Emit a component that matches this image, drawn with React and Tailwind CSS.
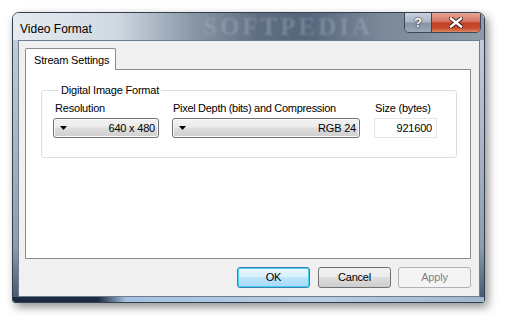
import React from "react";

const Combo = ({ value, width }) => (
    <div
        className={`${width} h-[20px] flex items-center justify-between pl-[6px] pr-[3px] rounded-[3px] border border-[#707070] bg-[linear-gradient(to_bottom,#f2f2f2_0%,#ebebeb_45%,#dddddd_50%,#cfcfcf_100%)] shadow-[inset_0_0_0_1px_#fcfcfc]`}
    >
        <svg width="7" height="4" viewBox="0 0 7 4">
            <path d="M0 0 H7 L3.5 4 Z" fill="#000" />
        </svg>
        <span className="text-[11px] tracking-[-0.2px] text-black">{value}</span>
    </div>
);

const Button = ({ children, kind }) => {
    let cls = "border-[#707070] text-black bg-[linear-gradient(to_bottom,#f2f2f2_0%,#ebebeb_45%,#dddddd_50%,#cfcfcf_100%)]";
    if (kind === "default")
        cls = "border-[#3c7fb1] text-black bg-[linear-gradient(to_bottom,#eaf6fd_0%,#d9f0fc_45%,#bee6fd_50%,#a7d9f5_100%)] shadow-[inset_0_0_0_1px_#48d0f4]";
    if (kind === "disabled")
        cls = "border-[#adb2b5] text-[#838383] bg-[#f4f4f4]";
    return (
        <div className={`w-[73px] h-[21px] flex items-center justify-center rounded-[3px] border text-[11px] tracking-[-0.2px] ${cls}`}>
            {children}
        </div>
    );
};

export default function App() {
    return (
        <div className="w-[506px] h-[324px] bg-white pl-[12px] pt-[12px] font-['Liberation_Sans',Arial,sans-serif] overflow-hidden">
            <div className="w-[473px] h-[291px] flex flex-col rounded-t-[7px] rounded-b-[3px] border border-[#34404f] shadow-[3px_4px_10px_rgba(0,0,0,0.45)] overflow-hidden">
                {/* title bar */}
                <div className="h-[27px] flex items-start justify-between pr-[3px] relative overflow-hidden bg-[linear-gradient(to_right,#e6ebf0_0%,#cfd8e1_22%,#8a98a8_38%,#5f6e80_52%,#56657a_62%,#7a8899_78%,#8f9ba8_100%)]">
                    <span className="pl-[7px] pt-[7px] text-[12px] text-black relative z-10">Video Format</span>
                    <span className="absolute left-[190px] top-0 text-[25px] leading-[27px] font-bold tracking-[3px] text-[#aebdce] opacity-35 blur-[1px] font-['Liberation_Serif',serif]">
                        SOFTPEDIA
                    </span>
                    <div className="-mt-px flex h-[21px] rounded-b-[5px] border border-[#3d4654] overflow-hidden relative z-10">
                        <div className="w-[27px] flex items-center justify-center border-r border-[#3d4654] bg-[linear-gradient(to_bottom,#c9d2dc_0%,#aab6c3_48%,#8593a3_52%,#9aa9b8_100%)]">
                            <span className="text-[13px] font-bold text-white [text-shadow:0_0_2px_#222,0_0_1px_#222]">?</span>
                        </div>
                        <div className="w-[48px] flex items-center justify-center bg-[linear-gradient(to_bottom,#e8a796_0%,#d6725f_45%,#c24126_52%,#c84c2e_80%,#de8a66_100%)]">
                            <svg width="14" height="11" viewBox="0 0 14 11">
                                <path d="M2 1.5 L12 9.5 M12 1.5 L2 9.5" stroke="#3a1a14" strokeWidth="4.2" strokeLinecap="square" />
                                <path d="M2 1.5 L12 9.5 M12 1.5 L2 9.5" stroke="#fff" strokeWidth="2.4" strokeLinecap="square" />
                            </svg>
                        </div>
                    </div>
                </div>

                {/* frame sides + client */}
                <div className="flex-1 flex px-[5px] pr-[4px] bg-[linear-gradient(to_bottom,#c2ccd7_0%,#a9b5c2_40%,#8e9cad_80%,#4b5a72_100%)]">
                    <div className="flex-1 flex flex-col border border-[#6e7d90] bg-[#f0f0f0] pt-[7px] pl-[6px] pr-[8px] pb-[8px]">
                        {/* tab header */}
                        <div className="flex">
                            <div className="h-[22px] w-[91px] -mb-px relative z-10 bg-white border border-b-0 border-[#898c95] rounded-t-[2px] pl-[8px] pt-[3px] text-[11px] tracking-[-0.2px] text-black">
                                Stream Settings
                            </div>
                        </div>
                        {/* tab panel */}
                        <div className="h-[190px] bg-white border border-[#898c95] pl-[15px] pr-[13px]">
                            <fieldset className="mt-[13px] h-[75px] border border-[#d5dfe5] rounded-[3px] pl-[11px] pr-[10px] pt-[5px]">
                                <legend className="ml-[6px] px-[2px] text-[11px] tracking-[-0.2px] text-black leading-[14px]">
                                    Digital Image Format
                                </legend>
                                <div className="flex gap-[13px]">
                                    <div className="flex flex-col gap-[3px]">
                                        <span className="pl-[2px] text-[11px] tracking-[-0.2px] text-black leading-[13px]">Resolution</span>
                                        <Combo value="640 x 480" width="w-[106px]" />
                                    </div>
                                    <div className="flex flex-col gap-[3px]">
                                        <span className="pl-[1px] text-[11px] tracking-[-0.3px] text-black leading-[13px]">Pixel Depth (bits) and Compression</span>
                                        <Combo value="RGB 24" width="w-[188px]" />
                                    </div>
                                    <div className="flex flex-col gap-[3px] ml-[1px]">
                                        <span className="pl-[1px] text-[11px] tracking-[-0.2px] text-black leading-[13px]">Size (bytes)</span>
                                        <div className="w-[63px] h-[20px] flex items-center justify-end pr-[4px] border border-[#e3e6ea] text-[11px] tracking-[-0.2px] text-black">
                                            921600
                                        </div>
                                    </div>
                                </div>
                            </fieldset>
                        </div>
                        {/* buttons */}
                        <div className="mt-[8px] flex justify-end gap-[8px]">
                            <Button kind="default">OK</Button>
                            <Button>Cancel</Button>
                            <div className="-ml-px">
                                <Button kind="disabled">Apply</Button>
                            </div>
                        </div>
                    </div>
                </div>
                {/* bottom frame */}
                <div className="h-[5px] bg-[linear-gradient(to_right,#1c2941_0%,#1c2941_18%,#a4c2e0_24%,#b7cde2_65%,#9fb6cc_100%)]" />
            </div>
        </div>
    );
}
